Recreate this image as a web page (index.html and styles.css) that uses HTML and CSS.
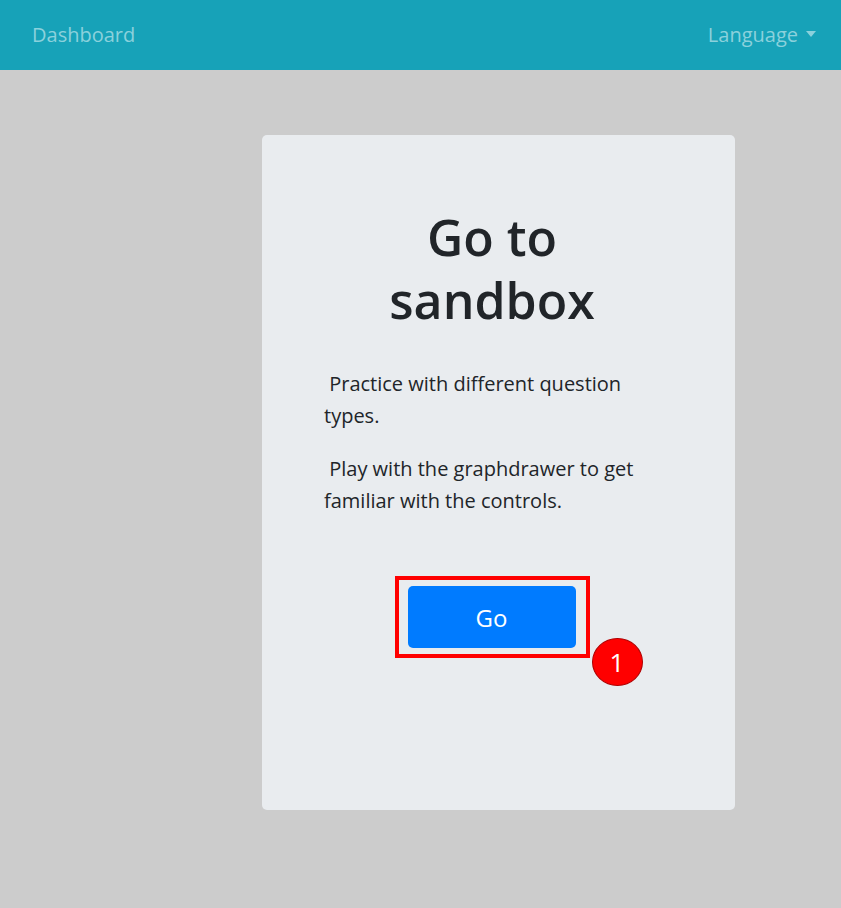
FILE: index.html
```html
<!DOCTYPE html>
<html lang="en">
<head>
<meta charset="utf-8">
<title>Go to sandbox</title>
<link rel="stylesheet" href="styles.css">
</head>
<body>
<nav class="navbar">
  <a class="brand" href="#">Dashboard</a>
  <a class="lang" href="#">Language<span class="caret"></span></a>
</nav>
<main class="page">
  <section class="card">
    <h1 class="title">Go to<br>sandbox</h1>
    <p class="text">&nbsp;Practice with different question types.</p>
    <p class="text">&nbsp;Play with the graphdrawer to get familiar with the controls.</p>
    <div class="actions">
      <div class="highlight">
        <button class="btn" type="button">Go</button>
        <span class="badge">1</span>
      </div>
    </div>
  </section>
</main>
</body>
</html>
```
FILE: styles.css
```css
* { box-sizing: border-box; }
html, body { margin: 0; padding: 0; }
body {
  background: #cccccc;
  font-family: "Open Sans", "Noto Sans", sans-serif;
  color: #212529;
  min-height: 908px;
}
.navbar {
  height: 70px;
  background: #17a2b8;
  display: flex;
  align-items: center;
  justify-content: space-between;
  padding: 0 25px 2px 32px;
}
.brand, .lang {
  color: #8bd1dc;
  text-decoration: none;
  font-size: 20px;
  display: flex;
  align-items: center;
}
.caret {
  display: inline-block;
  margin-left: 8px;
  border-left: 5.5px solid transparent;
  border-right: 5.5px solid transparent;
  border-top: 6px solid #8bd1dc;
}
.page {
  padding: 65px 0 0 262px;
}
.card {
  width: 473px;
  height: 675px;
  background: #e9ecef;
  border-radius: 5px;
  padding: 71px 75px 0 62px;
}
.title {
  margin: 0 0 36px;
  text-align: center;
  font-size: 50px;
  line-height: 63px;
  font-weight: 600;
  color: #212529;
}
.text {
  margin: 0 0 21px;
  font-size: 20px;
  line-height: 32px;
}
.actions {
  display: flex;
  justify-content: center;
  padding-top: 38px;
}
.highlight {
  position: relative;
  border: 4px solid #ff0000;
  padding: 6px 10px 6px 9px;
}
.btn {
  display: block;
  width: 168px;
  height: 62px;
  border: 0;
  border-radius: 5px;
  background: #007bff;
  color: #ffffff;
  font-family: inherit;
  font-size: 24px;
}
.badge {
  position: absolute;
  left: 193px;
  top: 58px;
  width: 51px;
  height: 48px;
  border-radius: 50%;
  background: #ff0000;
  border: 1px solid #b00000;
  color: #ffffff;
  font-size: 26px;
  display: flex;
  align-items: center;
  justify-content: center;
}
```
